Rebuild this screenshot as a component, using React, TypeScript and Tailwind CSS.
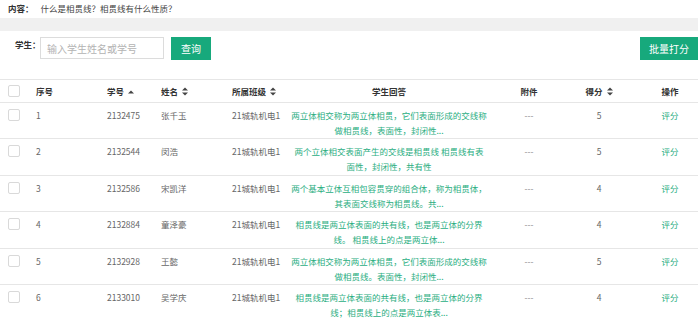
import React from "react";

const rows = [
  { no: "1", id: "2132475", name: "张千玉", cls: "21城轨机电1", a1: "两立体相交称为两立体相贯，它们表面形成的交线称", a2: "做相贯线，表面性，封闭性...", score: "5" },
  { no: "2", id: "2132544", name: "闵浩", cls: "21城轨机电1", a1: "两个立体相交表面产生的交线是相贯线 相贯线有表", a2: "面性，封闭性，共有性", score: "5" },
  { no: "3", id: "2132586", name: "宋凯洋", cls: "21城轨机电1", a1: "两个基本立体互相包容贯穿的组合体，称为相贯体，", a2: "其表面交线称为相贯线。共...", score: "4" },
  { no: "4", id: "2132884", name: "童泽豪", cls: "21城轨机电1", a1: "相贯线是两立体表面的共有线，也是两立体的分界", a2: "线。 相贯线上的点是两立体...", score: "4" },
  { no: "5", id: "2132928", name: "王懿", cls: "21城轨机电1", a1: "两立体相交称为两立体相贯，它们表面形成的交线称", a2: "做相贯线。表面性，封闭性...", score: "5" },
  { no: "6", id: "2133010", name: "吴学庆", cls: "21城轨机电1", a1: "相贯线是两立体表面的共有线，也是两立体的分界", a2: "线；相贯线上的点是两立体表...", score: "4" },
];

const grid = "grid grid-cols-[28px_71px_54px_71px_64px_202px_78px_62px_68px]";

function SortBoth() {
  return (
    <svg width="6" height="9" viewBox="0 0 6 9" className="ml-[4px] inline-block">
      <path d="M0 3.6 L3 0.4 L6 3.6 Z" fill="#444" />
      <path d="M0 5.4 L3 8.6 L6 5.4 Z" fill="#444" />
    </svg>
  );
}

function SortUp() {
  return (
    <svg width="6" height="9" viewBox="0 0 6 9" className="ml-[4px] inline-block">
      <path d="M0 6.6 L3 3.4 L6 6.6 Z" fill="#444" />
    </svg>
  );
}

function Box() {
  return <div className="w-[12px] h-[12px] border border-[#d9d9d9] rounded-[2px] bg-white" />;
}

export default function App() {
  return (
    <div
      lang="zh-CN"
      className="w-[698px] h-[319px] overflow-hidden bg-white text-[8.5px] text-[#666]"
      style={{ fontFamily: '"Noto Sans CJK SC", "Liberation Sans", sans-serif' }}
    >
      <div className="h-[18px] pl-[8px] leading-[16px] text-[#444]">
        <span className="font-bold text-[#333]">内容：</span>
        <span className="ml-[7px]">什么是相贯线？相贯线有什么性质？</span>
      </div>
      <div className="h-[13px] bg-[#f0f0f0]" />
      <div className="h-[48px] pt-[6px] flex items-start">
        <div className="pl-[15px] leading-[14px] font-bold text-[#333] w-[40px] whitespace-nowrap">学生：</div>
        <div className="w-[124px] h-[22px] border border-[#dcdcdc] pl-[6px] flex items-center text-[10px] text-[#b3b3b3]">
          输入学生姓名或学号
        </div>
        <div className="ml-[7px] w-[40px] h-[23px] bg-[#17a97c] text-white text-[10px] flex items-center justify-center">
          查询
        </div>
        <div className="ml-auto w-[58px] h-[23px] bg-[#17a97c] text-white text-[10px] flex items-center justify-center">
          批量打分
        </div>
      </div>
      <div className="border-t border-[#e6e6e6]">
        <div className={`${grid} h-[23px] items-center border-b border-[#e6e6e6] font-bold text-[#333]`}>
          <div className="pl-[8px]"><Box /></div>
          <div className="pl-[8px]">序号</div>
          <div className="pl-[8px] flex items-center">学号<SortUp /></div>
          <div className="pl-[8px] flex items-center">姓名<SortBoth /></div>
          <div className="pl-[8px] flex items-center whitespace-nowrap">所属班级<SortBoth /></div>
          <div className="text-center">学生回答</div>
          <div className="text-center">附件</div>
          <div className="flex items-center justify-center">得分<SortBoth /></div>
          <div className="text-center pl-[12px]">操作</div>
        </div>
        {rows.map((r) => (
          <div key={r.no} className={`${grid} h-[36.4px] border-b border-[#e6e6e6] pt-[5px] leading-[15px] items-start`}>
            <div className="pl-[8px] pt-[1px]"><Box /></div>
            <div className="pl-[8px]">{r.no}</div>
            <div className="pl-[8px]">{r.id}</div>
            <div className="pl-[8px]">{r.name}</div>
            <div className="pl-[8px] whitespace-nowrap">{r.cls}</div>
            <div className="text-center text-[#2aae7f] whitespace-nowrap">
              <div>{r.a1}</div>
              <div>{r.a2}</div>
            </div>
            <div className="text-center text-[#888]">---</div>
            <div className="text-center">{r.score}</div>
            <div className="text-center pl-[12px] text-[#2aae7f]">评分</div>
          </div>
        ))}
      </div>
    </div>
  );
}
